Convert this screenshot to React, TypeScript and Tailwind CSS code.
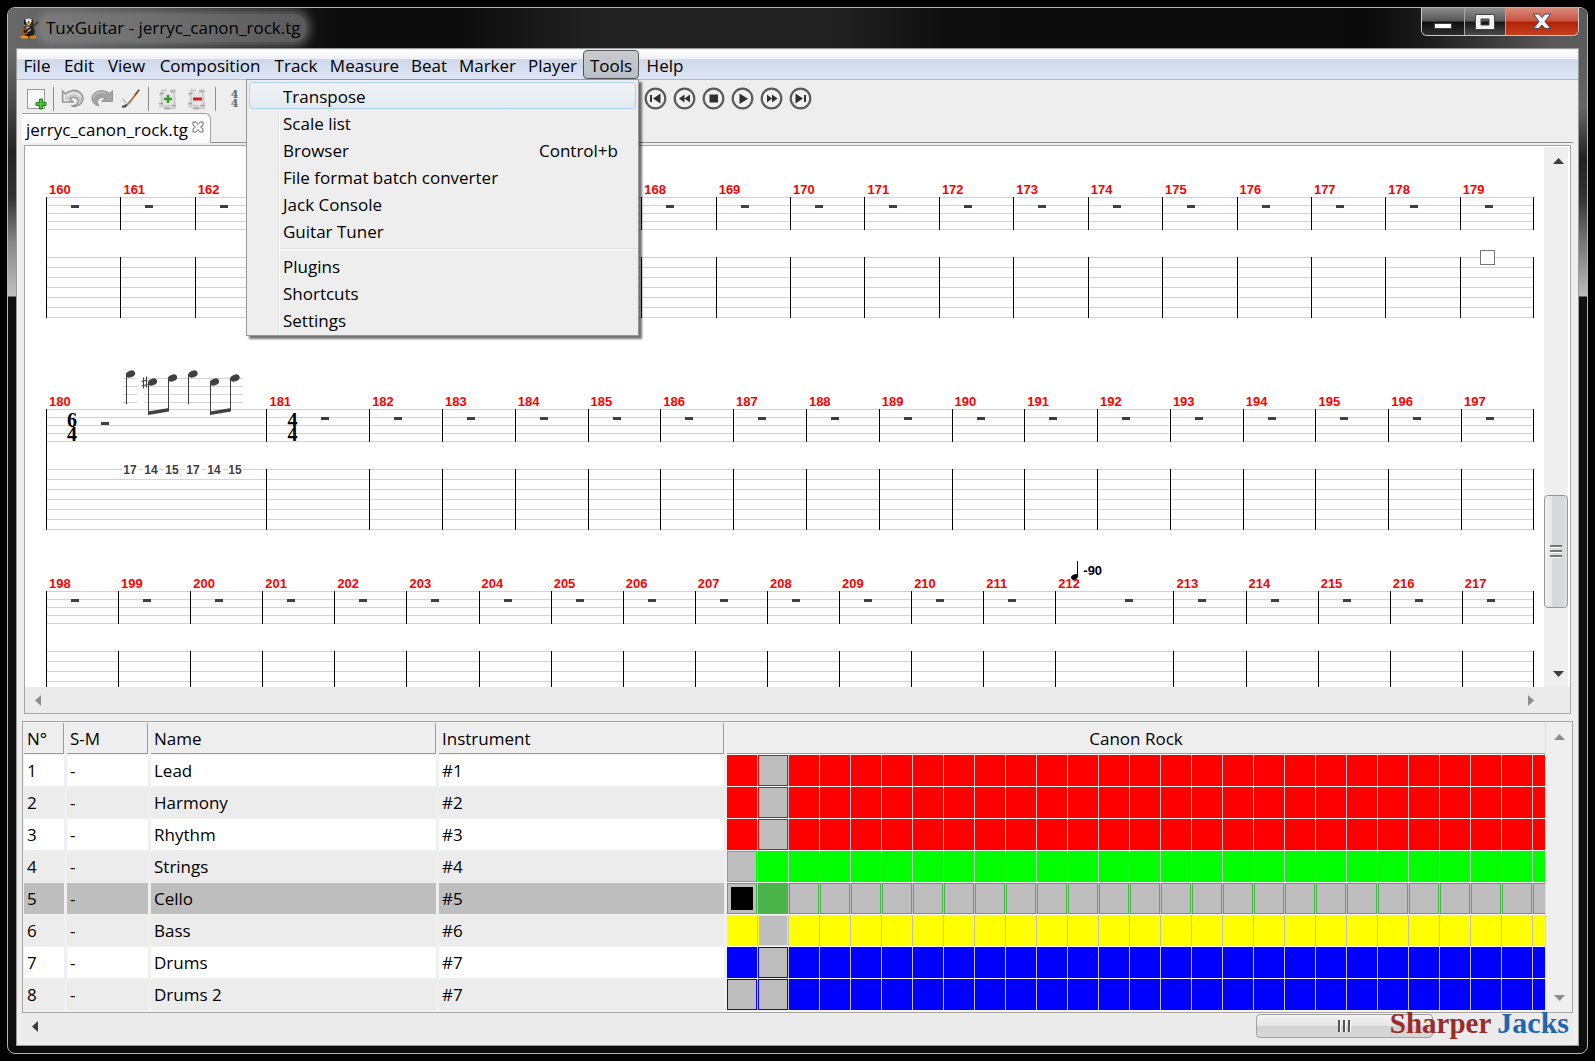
import React from "react";

type Measure = {
  n: number;
  w: number;
  time?: [string, string];
  notes?: boolean;
  tempo?: boolean;
  caret?: boolean;
};

const span = (from: number, to: number, w: number): Measure[] =>
  Array.from({ length: to - from + 1 }, (_, i) => ({ n: from + i, w }));

const systems: { id: string; pad: string; measures: Measure[] }[] = [
  {
    id: "a",
    pad: "pt-9",
    measures: [...span(160, 178, 74), { n: 179, w: 74, caret: true }],
  },
  {
    id: "b",
    pad: "pt-[77px]",
    measures: [
      { n: 180, w: 221, time: ["6", "4"], notes: true },
      { n: 181, w: 103, time: ["4", "4"] },
      ...span(182, 197, 73),
    ],
  },
  {
    id: "c",
    pad: "pt-[47px]",
    measures: [...span(198, 211, 72), { n: 212, w: 118, tempo: true }, ...span(213, 217, 72)],
  },
];

const frets = ["17", "14", "15", "17", "14", "15"];

type Track = { name: string; ins: string; fill: string; edge: string; empty: number[]; selected?: boolean };
const red = { fill: "bg-[#ff0000]", edge: "border-[#ff0000]" };
const blue = { fill: "bg-[#0000ff]", edge: "border-[#0000ff]" };
const COLS = 64;
const tracks: Track[] = [
  { name: "Lead", ins: "#1", ...red, empty: [1] },
  { name: "Harmony", ins: "#2", ...red, empty: [1] },
  { name: "Rhythm", ins: "#3", ...red, empty: [1] },
  { name: "Strings", ins: "#4", fill: "bg-[#00ff00]", edge: "border-[#00ff00]", empty: [0] },
  {
    name: "Cello",
    ins: "#5",
    fill: "bg-[#4ab34a]",
    edge: "border-[#4ab34a]",
    empty: Array.from({ length: COLS }, (_, i) => i).filter((i) => i !== 1),
    selected: true,
  },
  { name: "Bass", ins: "#6", fill: "bg-[#ffff00]", edge: "border-[#ffff00]", empty: [1] },
  { name: "Drums", ins: "#7", ...blue, empty: [1] },
  { name: "Drums 2", ins: "#7", ...blue, empty: [0, 1] },
];

const menus: { label: string; w: string }[] = [
  { label: "File", w: "w-10" },
  { label: "Edit", w: "w-11" },
  { label: "View", w: "w-[51px]" },
  { label: "Composition", w: "w-[116px]" },
  { label: "Track", w: "w-[56px]" },
  { label: "Measure", w: "w-[81px]" },
  { label: "Beat", w: "w-12" },
  { label: "Marker", w: "w-[69px]" },
  { label: "Player", w: "w-[61px]" },
];

function Head({ x, y }: { x: number; y: number }) {
  return <ellipse cx={x} cy={y} rx="4.8" ry="3.3" transform={`rotate(-22 ${x} ${y})`} fill="#404040" />;
}

function MelodyDrawing() {
  return (
    <svg width="210" height="60" viewBox="1 0 210 60" className="absolute bottom-[21px] left-0" aria-hidden="true">
      {[17, 25, 33, 41].map((y) => (
        <path key={y} d={`M77 ${y + 0.5}h14M98 ${y + 0.5}h99`} stroke="#d3d3d3" strokeWidth="1" />
      ))}
      <g fill="none" stroke="#404040" strokeWidth="1">
        <path d="M80.500 13V43M102.500 21V52M122.500 17V49M142.500 13V43M164.500 21V52M184.500 17V49" />
        <path d="M97.500 16.500v11M100.500 15.500v11M95.500 20.500l6-1.500M95.500 25l6-1.500" />
      </g>
      <path d="M102 50.500L123 47v3.500L102 54zM164 50.500L185 47v3.500L164 54z" fill="#404040" />
      <Head x={84.5} y={13} />
      <Head x={106.5} y={21} />
      <Head x={126.5} y={17} />
      <Head x={147} y={13} />
      <Head x={168.5} y={21} />
      <Head x={189} y={17} />
    </svg>
  );
}

function MeasureView({ m, first, last }: { m: Measure; first: boolean; last: boolean }) {
  const bar = "border-l border-black " + (last ? "border-r " : "");
  let restClass = "mt-2 ml-6";
  if (m.tempo) restClass = "mt-2 ml-[69px]";
  if (m.notes) restClass = "mt-[13px] ml-6";
  else if (m.time) restClass = "mt-2 ml-6";
  return (
    <div className="relative min-w-0 basis-0" style={{ flexGrow: m.w }}>
      <div className="h-3.5 pl-[3px] text-[13px] leading-3.5 font-bold text-[#ff0000] [font-family:'Liberation_Sans',Arial,sans-serif]">
        {m.n}
      </div>
      <div
        className={
          bar +
          "relative flex h-[33px] items-start bg-[repeating-linear-gradient(to_bottom,#d3d3d3_0px,#d3d3d3_1px,transparent_1px,transparent_8px)]"
        }
      >
        {m.time && (
          <div className="ml-5 flex w-2.5 flex-col pt-1 text-[20px] leading-3.5 font-bold text-black [font-family:'Liberation_Serif',serif]">
            <span>{m.time[0]}</span>
            <span>{m.time[1]}</span>
          </div>
        )}
        <div className={restClass + " h-[3px] w-2 shrink-0 bg-[#404040]"} />
        {m.notes && <MelodyDrawing />}
        {m.tempo && (
          <div className="absolute -top-[30px] left-[14px] flex items-center gap-1 text-[13px] leading-4 font-bold text-black [font-family:'Liberation_Sans',Arial,sans-serif]">
            <svg width="9" height="20" viewBox="0 0 9 20" aria-hidden="true">
              <path d="M7.500 0v16" stroke="#000" strokeWidth="1" />
              <ellipse cx="4.500" cy="16" rx="3.600" ry="2.500" transform="rotate(-25 4.500 16)" />
            </svg>
            <span>-90</span>
          </div>
        )}
      </div>
      <div className={first ? "h-[27px] border-l border-black" : "h-[27px]"} />
      <div
        className={
          bar +
          "relative h-[61px] bg-[repeating-linear-gradient(to_bottom,#d3d3d3_0px,#d3d3d3_1px,transparent_1px,transparent_10px)]"
        }
      >
        {m.notes && (
          <div className="absolute -top-[5px] left-[75px] flex gap-[5px] text-[12px] leading-3 font-bold text-[#404040] [font-family:'Liberation_Sans',Arial,sans-serif]">
            {frets.map((f, i) => (
              <span key={i} className="w-4 bg-white text-center">
                {f}
              </span>
            ))}
          </div>
        )}
        {m.caret && <div className="absolute -top-[7px] left-[19px] size-[15px] border border-[#777] bg-white" />}
      </div>
    </div>
  );
}

function Arrow({ dir, dim }: { dir: "up" | "down" | "left" | "right"; dim?: boolean }) {
  const d = {
    up: "M6.500 3L12 9H1z",
    down: "M6.500 10L12 4H1z",
    left: "M4 6.500L10 1v11z",
    right: "M10 6.500L4 1v11z",
  }[dir];
  return (
    <svg width="13" height="13" viewBox="0 0 13 13" aria-hidden="true">
      <path d={d} fill={dim ? "#8d8d8d" : "#3c3c3c"} />
    </svg>
  );
}

function ScrollButton({ dir, dim, cls }: { dir: "up" | "down" | "left" | "right"; dim?: boolean; cls: string }) {
  return (
    <button type="button" aria-label={"Scroll " + dir} className={"flex items-center justify-center " + cls}>
      <Arrow dir={dir} dim={dim} />
    </button>
  );
}

function TuxIcon() {
  return (
    <svg width="20" height="22" viewBox="0 0 20 22" aria-hidden="true">
      <ellipse cx="9" cy="14.500" rx="6" ry="6" fill="#171717" />
      <path d="M4 3Q8.500-1.500 13 3L13.500 8Q8.500 10 4 7z" fill="#1a1a1a" />
      <path d="M5 2.500Q8.500 0 12 2.500l-1 1.500H6z" fill="#dcdcdc" />
      <circle cx="7" cy="4.500" r="1.200" fill="#fff" />
      <circle cx="10.300" cy="4.500" r="1.200" fill="#fff" />
      <path d="M6 6l5.500-.5L9.500 8.500H7.500z" fill="#f5a313" />
      <path d="M6.500 9.500h3.500l1 3.500-2.500 2-3-2z" fill="#bdbdbd" />
      <ellipse cx="4.500" cy="14.500" rx="3.500" ry="3.300" fill="#a85510" />
      <ellipse cx="5" cy="14.500" rx="1.500" ry="1.500" fill="#1d0f04" />
      <path d="M5 14.500L18 5.500" stroke="#2e1c0e" strokeWidth="1.600" />
      <path d="M16 4l3 1-1.500 2.500z" fill="#2a2a2a" />
      <ellipse cx="4.500" cy="20" rx="4" ry="1.500" fill="#ee9414" />
      <ellipse cx="13" cy="20" rx="3.500" ry="1.500" fill="#d98412" />
    </svg>
  );
}

function NewIcon() {
  return (
    <svg width="22" height="24" viewBox="0 0 22 24" aria-hidden="true">
      <rect x="1.500" y="2.500" width="17" height="19" fill="#f8f8f8" stroke="#9b9b9b" />
      <path d="M13.500 12h3v3.500H20v3h-3.500V22h-3v-3.500H10v-3h3.500z" fill="#4fbf3f" stroke="#1f8018" />
    </svg>
  );
}

function UndoIcon() {
  return (
    <svg width="24" height="20" viewBox="0 0 24 20" aria-hidden="true">
      <path
        d="M1.500 2l2.800 2.800C8 .8 15 0 19 3.500c5 4 3.500 11-3 13.500-2 .8-4 .5-5 0 4-.5 7-3 6-6-1-2.500-5-3.500-8-1.500l3 3.500H1.500z"
        fill="#c9c9c9"
        stroke="#929292"
        strokeWidth="1.300"
      />
      <path d="M3.500 5v6.500h4M5.500 7.200c4-4 12-3.700 14 .8" stroke="#ececec" strokeWidth="1.300" fill="none" />
    </svg>
  );
}

function RedoIcon() {
  return (
    <svg width="24" height="20" viewBox="0 0 24 20" aria-hidden="true">
      <path
        d="M22.500 1.500v11H12l3-3.500c-4-1.500-8 1-7.500 4.500.2 1.500.8 2.700 1.500 3.500-4-.5-7.500-4-7-8.500C2.700 2.500 12-1 19.500 4.300z"
        fill="#a3a3a3"
        stroke="#949494"
      />
      <path d="M3.500 9C4.500 4 11 2 16 4.500" stroke="#c4c4c4" strokeWidth="1.300" fill="none" />
    </svg>
  );
}

function BrushIcon() {
  return (
    <svg width="20" height="22" viewBox="0 0 20 22" aria-hidden="true">
      <path d="M18 2L8.500 14.500" stroke="#b5702a" strokeWidth="1.800" />
      <path d="M18.300 1.600L14 7" stroke="#6e4a25" strokeWidth="1.300" />
      <path d="M9 13.500l-3.500 4C4.500 18.600 3 19 1.500 18.500" stroke="#8a8a8a" strokeWidth="2" fill="none" />
      <path d="M5.500 16.500c-1 1.800-2.500 2.300-4.500 2" stroke="#4f4f4f" strokeWidth="2" fill="none" />
      <path d="M1.500 10.500L5 15" stroke="#a9a9a9" strokeWidth="1.200" />
    </svg>
  );
}

function TrackIcon({ minus }: { minus?: boolean }) {
  return (
    <svg width="20" height="22" viewBox="0 0 20 22" aria-hidden="true">
      <path
        d="M3 2.500h6M12 2.500h6M1 6.500h13M3 10.500h15M3 14.500h15M1 17.500h11M6 20h12M4 2v18M16 2v17"
        stroke="#d0d0d0"
        strokeWidth="2.600"
        fill="none"
      />
      <path d="M2 5.500h4M12 3.500h5M1 15.500h5M13 17.500h5M6 20.500h6" stroke="#a3a3a3" strokeWidth="1.300" fill="none" />
      <rect x="5" y="5.500" width="10" height="11" fill="#e4e6e4" />
      {minus ? (
        <path d="M6 9.500h9V12.500H6z" fill="#cc1f1f" />
      ) : (
        <path d="M8.800 7h2.400v2.800H14v2.400h-2.800V15H8.800v-2.800H6V9.800h2.800z" fill="#2f9a28" />
      )}
    </svg>
  );
}

function Transport({ kind, label }: { kind: string; label: string }) {
  return (
    <button type="button" aria-label={label} className="flex size-[29px] shrink-0 items-center justify-center">
      <svg width="23" height="23" viewBox="0 0 23 23" aria-hidden="true">
        <circle cx="11.500" cy="11.500" r="9.800" fill="#f1f1f1" stroke="#5a5a5a" strokeWidth="2.200" />
        <path d={kind} fill="#2f2f2f" />
      </svg>
    </button>
  );
}

const transports = [
  { label: "First", kind: "M6 8h2v7H6zM16.500 6.500v10L9 11.500z" },
  { label: "Previous", kind: "M11.500 7.500v8L6 11.500zM17 7.500v8l-5.500-4z" },
  { label: "Stop", kind: "M7.500 7.500h8.500v8H7.500z" },
  { label: "Play", kind: "M8.500 6.500v10.500L17 11.700z" },
  { label: "Next", kind: "M7 7.500v8l5-4zM12 7.500v8l5.500-4z" },
  { label: "Last", kind: "M6.500 6.500v10L14 11.500zM15 8h2v7h-2z" },
];

function ToolButton({ label, cls, children }: { label: string; cls: string; children: React.ReactNode }) {
  return (
    <button type="button" aria-label={label} className={"flex h-8 shrink-0 items-center justify-center " + cls}>
      {children}
    </button>
  );
}

const Divider = () => <div className="h-6 w-px shrink-0 bg-[#8c8c8c]" />;

function MenuItem({ label, hint, active }: { label: string; hint?: string; active?: boolean }) {
  return (
    <button
      type="button"
      role="menuitem"
      className={
        "relative mx-0.5 flex h-[27px] items-center justify-between rounded-[3px] border pt-0.5 pr-[17px] pl-[33px] leading-6 " +
        (active ? "border-[#aecff7] bg-linear-to-b from-[#f0f2f4] to-[#e4ebf2]" : "border-transparent")
      }
    >
      <span>{label}</span>
      {hint && <span>{hint}</span>}
    </button>
  );
}

function ToolsMenu() {
  return (
    <div
      role="menu"
      className="absolute top-full right-0 z-20 flex w-[393px] flex-col border border-[#979797] bg-[#eeeeee] py-0.5 shadow-[3px_3px_2px_rgba(0,0,0,0.55)]"
    >
      <div className="absolute top-0.5 bottom-0.5 left-[31px] w-0.5 border-l border-[#e0e0e0] bg-white" />
      <MenuItem label="Transpose" active />
      <MenuItem label="Scale list" />
      <MenuItem label="Browser" hint="Control+b" />
      <MenuItem label="File format batch converter" />
      <MenuItem label="Jack Console" />
      <MenuItem label="Guitar Tuner" />
      <div className="mt-1 mb-0.5 ml-8 h-0.5 border-t border-[#dcdcdc] bg-white" />
      <MenuItem label="Plugins" />
      <MenuItem label="Shortcuts" />
      <MenuItem label="Settings" />
    </div>
  );
}

function TitleBar() {
  return (
    <header className="flex h-10 shrink-0 items-start bg-[linear-gradient(90deg,#6a6a6a_0px,#4c4c4c_130px,#2a2a2a_230px,#0b0b0b_330px,#0b0b0b_28%,#232323_38%,#222_52%,#0d0d0d_60%,#0a0a0a_86%,#1c1c1c_90%,#5a5a5a_98%)]">
      <div className="flex h-10 items-center pl-3">
        <TuxIcon />
        <h1 className="rounded-xl bg-[#8a8a8a]/60 px-1.5 text-[17px] leading-7 text-black shadow-[0_0_8px_4px_rgba(138,138,138,0.6)]">
          TuxGuitar - jerryc_canon_rock.tg
        </h1>
      </div>
      <div className="mr-2 ml-auto flex h-7 overflow-hidden rounded-b-md border border-t-0 border-[#c9c9c9]">
        <button
          type="button"
          aria-label="Minimize"
          className="flex w-[43px] items-center justify-center border-r border-[#a5a5a5] bg-[linear-gradient(#8c8c8c,#555_48%,#0e0e0e_52%,#2c2c2c)]"
        >
          <svg width="20" height="18" viewBox="0 0 20 18" aria-hidden="true">
            <rect x="1.500" y="10.500" width="17" height="5" fill="#fff" stroke="#444" />
          </svg>
        </button>
        <button
          type="button"
          aria-label="Maximize"
          className="flex w-[41px] items-center justify-center border-r border-[#a5a5a5] bg-[linear-gradient(#8f8f8f,#5b5b5b_48%,#161616_52%,#4a4a4a)]"
        >
          <svg width="20" height="16" viewBox="0 0 20 16" aria-hidden="true">
            <path d="M.5.5h19v15H.5zM6 5v6h8V5z" fill="#f2f2f2" stroke="#444" fillRule="evenodd" />
          </svg>
        </button>
        <button
          type="button"
          aria-label="Close"
          className="flex w-[72px] items-center justify-center bg-[linear-gradient(#d98a7a,#c85440_48%,#b02208_52%,#c8401c)]"
        >
          <svg width="20" height="17" viewBox="0 0 20 17" aria-hidden="true">
            <path
              d="M1.500 1h5.500l3 3.500L13 1h5.500l-5.500 7.500 5.500 7H13l-3-3.500-3 3.500H1.500L7 8.500z"
              fill="#f4f4f4"
              stroke="#44485a"
            />
          </svg>
        </button>
      </div>
    </header>
  );
}

function ScorePane() {
  return (
    <section aria-label="Score" className="mx-[7px] mt-0.5 flex min-h-0 flex-1 flex-col border border-[#a5a5a5] bg-white pt-px">
      <div className="flex min-h-0 flex-1">
        <div className="min-h-0 min-w-0 flex-1 overflow-hidden pr-2.5 pl-[21px]">
          {systems.map((s) => (
            <div key={s.id} className={"flex " + s.pad}>
              {s.measures.map((m, i) => (
                <MeasureView key={m.n} m={m} first={i === 0} last={i === s.measures.length - 1} />
              ))}
            </div>
          ))}
        </div>
        <div className="mr-0.5 flex w-6 shrink-0 flex-col bg-[#efefef]">
          <ScrollButton dir="up" cls="h-7 pl-1" />
          <div className="grow-[320]" />
          <div className="flex h-[113px] flex-col items-center justify-center gap-0.5 rounded-sm border border-[#979797] bg-[linear-gradient(90deg,#f2f2f2,#e6e6e6_30%,#d4d8d8_35%,#d6dada_80%,#e2e2e2)]">
            {[0, 1, 2].map((i) => (
              <div key={i} className="h-[3px] w-3 border-t-2 border-b border-t-[#777] border-b-white" />
            ))}
          </div>
          <div className="grow-[51]" />
          <ScrollButton dir="down" cls="h-7 pl-1" />
        </div>
      </div>
      <div className="flex h-[26px] shrink-0 items-center justify-between bg-[#ebebeb] pr-7">
        <ScrollButton dir="left" dim cls="h-6 w-6" />
        <ScrollButton dir="right" dim cls="h-6 w-6" />
      </div>
    </section>
  );
}

function TrackPane() {
  return (
    <section aria-label="Tracks" className="mx-[5px] mt-[7px] flex shrink-0 border border-[#a5a5a5] bg-[#f0f0f0] p-px">
      <table className="w-[703px] shrink-0 table-fixed border-separate border-spacing-0 text-left">
        <colgroup>
          <col className="w-[43px]" />
          <col className="w-[84px]" />
          <col className="w-[288px]" />
          <col className="w-[288px]" />
        </colgroup>
        <thead>
          <tr>
            {["N°", "S-M", "Name", "Instrument"].map((h) => (
              <th key={h} className="h-8 p-0 pr-[3px] pb-px font-normal">
                <div className="h-[31px] border-r border-b border-[#9c9c9c] bg-[#eeeeee] pt-px pl-[3px] leading-[30px]">{h}</div>
              </th>
            ))}
          </tr>
        </thead>
        <tbody>
          {tracks.map((t, i) => {
            const bg = t.selected ? "bg-[#bebebe]" : i % 2 ? "bg-[#ececec]" : "bg-white";
            return (
              <tr key={t.name}>
                {[String(i + 1), "-", t.name, t.ins].map((c, j) => (
                  <td key={j} className="h-8 p-0 pr-[3px] pb-px">
                    <div className={"h-[31px] pt-px pl-[3px] leading-[30px] " + bg}>{c}</div>
                  </td>
                ))}
              </tr>
            );
          })}
        </tbody>
      </table>
      <div className="min-w-0 flex-1 overflow-hidden bg-[#f6f6f6]">
        <div className="mb-px h-[31px] border-b border-[#9c9c9c] bg-[#eeeeee] pt-px text-center leading-[30px]">Canon Rock</div>
        {tracks.map((t) => (
          <div key={t.name} className="mb-px flex h-[31px] overflow-hidden bg-[#bebebe]">
            {Array.from({ length: COLS }, (_, c) => (
              <div
                key={c}
                className={
                  "mr-px h-[31px] w-[30px] shrink-0 " +
                  (t.empty.includes(c) ? "border bg-[#bebebe] " + t.edge : t.fill)
                }
              >
                {t.selected && c === 0 && <div className="mx-[3px] my-[3px] h-[23px] bg-black" />}
              </div>
            ))}
          </div>
        ))}
      </div>
      <div className="flex w-[26px] shrink-0 flex-col justify-between border-l border-[#dcdcdc] bg-[#efefef]">
        <ScrollButton dir="up" dim cls="h-7 pl-0.5" />
        <ScrollButton dir="down" dim cls="h-7 pl-0.5" />
      </div>
    </section>
  );
}

function BottomScroll() {
  return (
    <div className="relative mx-[5px] mt-px mb-1 flex h-[27px] shrink-0 items-start bg-[#ebebeb] pr-[140px]">
      <ScrollButton dir="left" cls="h-6 w-6" />
      <div className="ml-auto flex h-6 w-[177px] items-center justify-center gap-0.5 rounded-sm border border-[#a0a0a0] bg-[linear-gradient(#f2f2f2,#e6e6e6_48%,#d2d2d2_52%,#d8d8d8)]">
        {[0, 1, 2].map((i) => (
          <div key={i} className="h-3 w-[3px] border-r border-l-2 border-l-[#555] border-r-white" />
        ))}
      </div>
      <div className="absolute right-1 bottom-0.5 z-10 flex items-baseline gap-1.5 text-[29px] leading-8 font-bold [font-family:'Liberation_Serif',serif]">
        <span className="text-[#9c2b2b]">Sharper</span>
        <span className="text-[30px] text-[#1f66b0]">Jacks</span>
      </div>
    </div>
  );
}

export default function App() {
  return (
    <div className="h-screen min-h-[760px] bg-black p-[7px] text-[17px] text-black [font-family:'Open_Sans','Noto_Sans',sans-serif]">
      <div className="flex h-full flex-col overflow-hidden rounded-lg border border-[#b4b4b4] bg-[#0c0c0c]">
        <TitleBar />
        <div className="flex min-h-0 flex-1">
          <div className="w-2 shrink-0 bg-[linear-gradient(#6a6a6a_0px,#555_40px,#222_105px,#333_150px,#888_195px,#c0c0c0_248px,#101010_249px)]" />
          <main className="flex min-w-0 flex-1 flex-col border border-[#9a9a9a] bg-[#eeeeee]">
            <nav
              aria-label="Main menu"
              className="mt-px flex h-[30px] shrink-0 border-b border-[#b3b9c8] bg-[linear-gradient(#ffffff,#eef1f7_30%,#cfd9ea_33%,#dde5f4)]"
            >
              {menus.map((m) => (
                <button key={m.label} type="button" className={"shrink-0 pt-0.5 text-center whitespace-nowrap " + m.w}>
                  {m.label}
                </button>
              ))}
              <div className="relative">
                <button
                  type="button"
                  aria-expanded="true"
                  className="h-[29px] w-14 rounded-sm border border-[#555] bg-linear-to-b from-[#c9cacd] to-[#b9bfca] pt-0.5 text-center whitespace-nowrap"
                >
                  Tools
                </button>
                <ToolsMenu />
              </div>
              <button type="button" className="w-[52px] pt-0.5 text-center">
                Help
              </button>
            </nav>
            <div role="toolbar" className="flex h-[33px] shrink-0 items-center pt-1 pl-[9px]">
              <ToolButton label="New" cls="w-[22px]">
                <NewIcon />
              </ToolButton>
              <div className="w-[5px]" />
              <Divider />
              <ToolButton label="Undo" cls="ml-1 w-[29px]">
                <UndoIcon />
              </ToolButton>
              <ToolButton label="Redo" cls="w-[29px]">
                <RedoIcon />
              </ToolButton>
              <ToolButton label="Edit mode" cls="w-[29px]">
                <BrushIcon />
              </ToolButton>
              <div className="w-[3px]" />
              <Divider />
              <ToolButton label="Add track" cls="ml-1 w-[29px]">
                <TrackIcon />
              </ToolButton>
              <ToolButton label="Remove track" cls="w-[29px]">
                <TrackIcon minus />
              </ToolButton>
              <div className="w-1" />
              <Divider />
              <ToolButton label="Time signature" cls="ml-1 w-[29px]">
                <span className="flex flex-col text-[11px] leading-[9px] font-bold text-[#5d6b73] [font-family:'DejaVu_Serif',serif]">
                  <span>4</span>
                  <span>4</span>
                </span>
              </ToolButton>
              <div className="w-[392px] shrink-0" />
              {transports.map((t) => (
                <Transport key={t.label} {...t} />
              ))}
            </div>
            <div className="mr-[5px] ml-[5px] flex h-[30px] shrink-0" role="tablist">
              <div
                role="tab"
                aria-selected="true"
                className="flex w-[189px] shrink-0 items-center justify-between rounded-tr-md border-t border-r border-[#a0a0a0] bg-[#fbfbfb] pr-1.5 pl-1"
              >
                <span className="pt-0.5 whitespace-nowrap">jerryc_canon_rock.tg</span>
                <button type="button" aria-label="Close tab" className="pb-1">
                  <svg width="12" height="12" viewBox="0 0 12 12" aria-hidden="true">
                    <path
                      d="M1 1h3l2 2.500L8 1h3v3L8.500 6 11 8v3H8L6 8.500 4 11H1V8l2.500-2L1 4z"
                      fill="#fff"
                      stroke="#6e6e6e"
                    />
                  </svg>
                </button>
              </div>
              <div className="flex-1 border-b border-[#8f8f8f]" />
            </div>
            <ScorePane />
            <TrackPane />
            <BottomScroll />
          </main>
          <div className="w-2 shrink-0 bg-[linear-gradient(#5a5a5a_0px,#666_60px,#222_110px,#333_150px,#777_195px,#bcbcbc_248px,#101010_249px)]" />
        </div>
        <div className="h-[7px] shrink-0" />
      </div>
    </div>
  );
}
